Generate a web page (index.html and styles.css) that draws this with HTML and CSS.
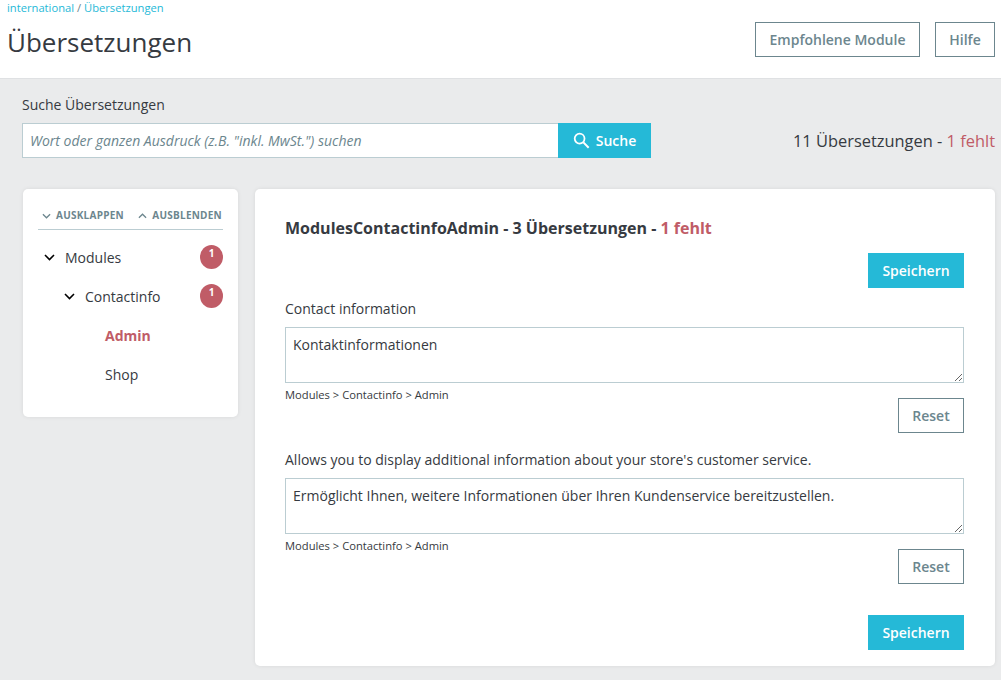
FILE: index.html
```html
<!DOCTYPE html>
<html lang="de">
<head>
<meta charset="utf-8">
<title>Übersetzungen</title>
<link rel="stylesheet" href="styles.css">
</head>
<body>
<header class="page-head">
  <div class="head-left">
    <nav class="crumbs"><a>international</a> / <a>Übersetzungen</a></nav>
    <h1 class="title">Übersetzungen</h1>
  </div>
  <div class="head-actions">
    <button class="btn btn-outline btn-wide">Empfohlene Module</button>
    <button class="btn btn-outline btn-help">Hilfe</button>
  </div>
</header>
<main class="content">
  <section class="search">
    <label class="search-label">Suche Übersetzungen</label>
    <div class="search-row">
      <div class="search-group">
        <input class="search-input" type="text" placeholder="Wort oder ganzen Ausdruck (z.B. &quot;inkl. MwSt.&quot;) suchen">
        <button class="btn btn-primary btn-search">
          <svg class="search-icon" viewBox="0 0 18 18" width="17" height="17"><circle cx="7" cy="7" r="5.2" fill="none" stroke="#fff" stroke-width="1.9"/><path d="M11 11l5.6 5.6" stroke="#fff" stroke-width="2.2" fill="none"/></svg>
          Suche
        </button>
      </div>
      <div class="summary">11 Übersetzungen - <span class="missing">1 fehlt</span></div>
    </div>
  </section>
  <div class="columns">
    <aside class="card tree-card">
      <div class="tree-tools">
        <span class="tool"><svg class="tool-icon" viewBox="0 0 10 6" width="9" height="6"><path d="M1 1l4 4 4-4" fill="none" stroke="#6c868e" stroke-width="1.4"/></svg>AUSKLAPPEN</span>
        <span class="tool"><svg class="tool-icon" viewBox="0 0 10 6" width="9" height="6"><path d="M1 5l4-4 4 4" fill="none" stroke="#6c868e" stroke-width="1.4"/></svg>AUSBLENDEN</span>
      </div>
      <ul class="tree">
        <li class="node level-1">
          <svg class="chev" viewBox="0 0 11 7" width="11" height="7"><path d="M1 1l4.5 4.5L10 1" fill="none" stroke="#000" stroke-width="1.6"/></svg>
          <span class="node-label">Modules</span><span class="badge">1</span>
        </li>
        <li class="node level-2">
          <svg class="chev" viewBox="0 0 11 7" width="11" height="7"><path d="M1 1l4.5 4.5L10 1" fill="none" stroke="#000" stroke-width="1.6"/></svg>
          <span class="node-label">Contactinfo</span><span class="badge">1</span>
        </li>
        <li class="node level-3 active"><span class="node-label">Admin</span></li>
        <li class="node level-3"><span class="node-label">Shop</span></li>
      </ul>
    </aside>
    <section class="card main-card">
      <h2 class="domain">ModulesContactinfoAdmin - 3 Übersetzungen - <span class="missing">1 fehlt</span></h2>
      <div class="row-end save-top"><button class="btn btn-primary btn-save">Speichern</button></div>
      <div class="entry">
        <p class="source">Contact information</p>
        <textarea class="field">Kontaktinformationen</textarea>
        <div class="path">Modules &gt; Contactinfo &gt; Admin</div>
        <div class="row-end reset-row"><button class="btn btn-outline btn-reset">Reset</button></div>
      </div>
      <div class="entry">
        <p class="source">Allows you to display additional information about your store's customer service.</p>
        <textarea class="field">Ermöglicht Ihnen, weitere Informationen über Ihren Kundenservice bereitzustellen.</textarea>
        <div class="path">Modules &gt; Contactinfo &gt; Admin</div>
        <div class="row-end reset-row"><button class="btn btn-outline btn-reset">Reset</button></div>
      </div>
      <div class="row-end save-bottom"><button class="btn btn-primary btn-save">Speichern</button></div>
    </section>
  </div>
</main>
</body>
</html>
```
FILE: styles.css
```css
* { box-sizing: border-box; }
html, body { margin: 0; padding: 0; }
body {
  width: 1001px;
  height: 680px;
  overflow: hidden;
  background: #eaebec;
  color: #363a41;
  font-family: "Open Sans", "Noto Sans", sans-serif;
  font-size: 14px;
  line-height: 1.5;
}
.page-head {
  display: flex;
  justify-content: space-between;
  height: 79px;
  padding: 0 6px 0 7px;
  background: #fff;
  border-bottom: 1px solid #dfe1e3;
}
.crumbs { font-size: 11.2px; line-height: 15px; color: #6c868e; }
.crumbs a { color: #25b9d7; }
.title {
  margin: 8px 0 0;
  font-size: 26px;
  line-height: 38px;
  font-weight: 400;
  color: #363a41;
}
.head-actions { display: flex; gap: 15px; padding-top: 22px; }
.btn {
  font-family: inherit;
  font-size: 14px;
  font-weight: 600;
  line-height: 20px;
  border-radius: 0;
  cursor: pointer;
  padding: 0;
}
.btn-outline { background: #fff; border: 1px solid #6c868e; color: #6c868e; height: 35px; }
.btn-wide { width: 165px; }
.btn-help { width: 60px; }
.btn-primary { background: #25b9d7; border: 0; color: #fff; height: 35px; }
.content { padding: 15px 6px 0 22px; }
.search-label { display: block; line-height: 21px; }
.search-row {
  display: flex;
  justify-content: space-between;
  align-items: center;
  margin-top: 8px;
}
.search-group { display: flex; }
.search-input {
  width: 536px;
  height: 35px;
  padding: 0 7px;
  border: 1px solid #bbcdd2;
  border-right: 0;
  background: #fff;
  font-family: inherit;
  font-size: 14px;
  font-style: italic;
  outline: 0;
}
.search-input::placeholder { color: #6c868e; opacity: 1; }
.btn-search {
  width: 93px;
  display: flex;
  align-items: center;
  justify-content: center;
  gap: 6px;
}
.summary { font-size: 16.42px; font-weight: 400; padding-top: 2px; }
.missing { color: #c05c67; }
.columns { display: flex; align-items: flex-start; gap: 17px; margin-top: 31px; margin-left: 1px; }
.card {
  background: #fff;
  border-radius: 5px;
  box-shadow: 0 0 4px rgba(0, 0, 0, .08);
}
.tree-card { width: 215px; height: 228px; padding: 19px 15px 0; }
.tree-tools {
  display: flex;
  justify-content: space-between;
  padding: 0 1px 6px 4px;
  border-bottom: 1px solid #bbcdd2;
  height: 22px;
}
.tool {
  display: flex;
  align-items: center;
  gap: 5px;
  font-size: 10px;
  line-height: 15px;
  font-weight: 700;
  letter-spacing: .25px;
  color: #6c868e;
}
.tree { list-style: none; margin: 8px 0 0; padding: 0; }
.node {
  display: flex;
  align-items: center;
  height: 39px;
  color: #363a41;
}
.level-1 { padding-left: 6px; }
.level-2 { padding-left: 26px; }
.level-3 { padding-left: 67px; }
.chev { margin-right: 10px; flex: none; }
.node-label { flex: 1; }
.active { color: #c05c67; font-weight: 700; }
.badge {
  width: 23px;
  height: 24px;
  margin-bottom: 1px;
  border-radius: 50%;
  background: #c05c67;
  color: #fff;
  font-size: 10px;
  font-weight: 700;
  line-height: 17px;
  text-align: center;
}
.main-card { width: 740px; height: 477px; padding: 27px 31px 0 30px; }
.domain { margin: 0; font-size: 16px; line-height: 24px; font-weight: 700; color: #363a41; }
.row-end { display: flex; justify-content: flex-end; }
.save-top { margin-top: 13px; }
.btn-save { width: 96px; }
.entry { margin-top: 10px; }
.entry + .entry { margin-top: 16px; }
.source { margin: 0; line-height: 21px; }
.field {
  display: block;
  width: 100%;
  height: 56px;
  margin-top: 8px;
  padding: 6px 7px;
  border: 1px solid #bbcdd2;
  border-radius: 0;
  font-family: inherit;
  font-size: 14px;
  line-height: 21px;
  color: #363a41;
  outline: 0;
  resize: vertical;
}
.path { margin-top: 4px; font-size: 11.2px; line-height: 15px; color: #363a41; }
.reset-row { margin-top: -4px; }
.btn-reset { width: 66px; }
.save-bottom { margin-top: 31px; }
```
